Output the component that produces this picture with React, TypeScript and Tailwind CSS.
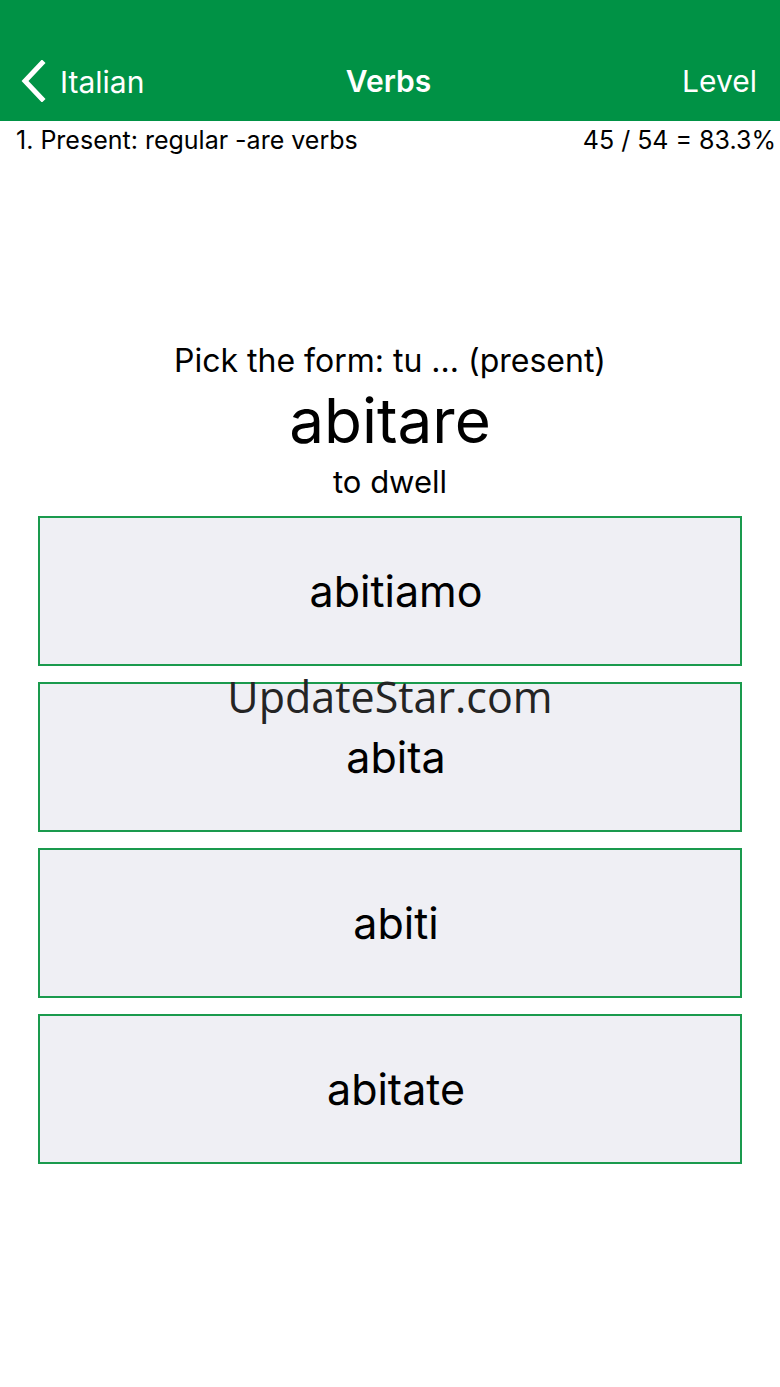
const choices = ["abitiamo", "abita", "abiti", "abitate"];

export default function App() {
  return (
    <div
      className="relative w-[780px] h-[1387px] bg-white text-black overflow-hidden"
      style={{ fontFamily: "Inter, 'Noto Sans', sans-serif" }}
    >
      {/* nav bar */}
      <div className="h-[121px] bg-[#009245] text-white flex items-center pt-[40px] px-[20px]">
        <div className="flex-1 flex items-center">
          <svg width="28" height="42" viewBox="0 0 28 42" className="mr-[12px]">
            <path d="M22 3 L5 21 L22 39" fill="none" stroke="white" strokeWidth="5" strokeLinecap="square" />
          </svg>
          <span className="text-[30px] leading-none mt-[2px]">Italian</span>
        </div>
        <div className="flex-1 text-center text-[30px] font-semibold leading-none">Verbs</div>
        <div className="flex-1 text-right text-[30px] leading-none pr-[3px]">Level</div>
      </div>

      {/* sub header */}
      <div className="flex justify-between pl-[16px] pr-[4px] pt-[4px] text-[25px] leading-[30px]">
        <span>1. Present: regular -are verbs</span>
        <span>45 / 54 = 83.3%</span>
      </div>

      {/* prompt */}
      <div className="flex flex-col items-center mt-[186px]">
        <div className="text-[32px] leading-[40px]">Pick the form: tu ... (present)</div>
        <div className="text-[62px] leading-[80px]">abitare</div>
        <div className="text-[31px] leading-[40px] mt-[1px]">to dwell</div>
      </div>

      {/* choices */}
      <div className="flex flex-col gap-[16px] px-[38px] mt-[14px]">
        {choices.map((c) => (
          <div
            key={c}
            className="h-[150px] bg-[#efeff4] border-2 border-[#1a9a4d] flex items-center justify-center pl-[12px] text-[43px]"
          >
            {c}
          </div>
        ))}
      </div>

      {/* watermark */}
      <div
        className="absolute left-0 right-0 top-[668px] text-center text-[43px] text-[#242424] leading-[58px]"
        style={{ fontFamily: "'Open Sans', 'DejaVu Sans', sans-serif" }}
      >
        UpdateStar.com
      </div>
    </div>
  );
}
